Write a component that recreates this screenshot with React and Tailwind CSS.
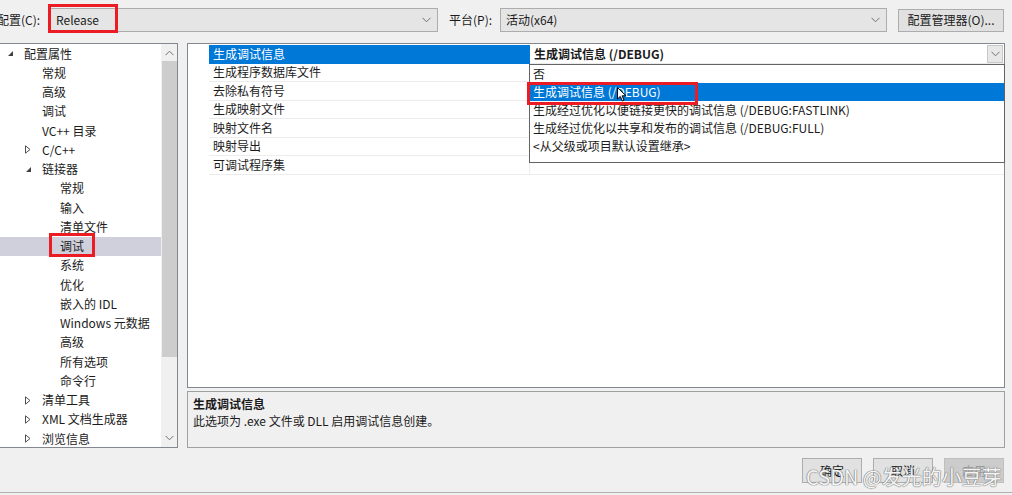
import React from 'react';

const FONT = '[font-family:"Noto_Sans_CJK_SC","Noto_Sans",sans-serif]';

const treeItems = [
  { label: '配置属性', level: 0, toggle: 'open' },
  { label: '常规', level: 1 },
  { label: '高级', level: 1 },
  { label: '调试', level: 1 },
  { label: 'VC++ 目录', level: 1 },
  { label: 'C/C++', level: 1, toggle: 'closed' },
  { label: '链接器', level: 1, toggle: 'open' },
  { label: '常规', level: 2 },
  { label: '输入', level: 2 },
  { label: '清单文件', level: 2 },
  { label: '调试', level: 2, selected: true },
  { label: '系统', level: 2 },
  { label: '优化', level: 2 },
  { label: '嵌入的 IDL', level: 2 },
  { label: 'Windows 元数据', level: 2 },
  { label: '高级', level: 2 },
  { label: '所有选项', level: 2 },
  { label: '命令行', level: 2 },
  { label: '清单工具', level: 1, toggle: 'closed' },
  { label: 'XML 文档生成器', level: 1, toggle: 'closed' },
  { label: '浏览信息', level: 1, toggle: 'closed' },
];

const props = [
  '生成调试信息',
  '生成程序数据库文件',
  '去除私有符号',
  '生成映射文件',
  '映射文件名',
  '映射导出',
  '可调试程序集',
];

const options = [
  '否',
  '生成调试信息 (/DEBUG)',
  '生成经过优化以便链接更快的调试信息 (/DEBUG:FASTLINK)',
  '生成经过优化以共享和发布的调试信息 (/DEBUG:FULL)',
  '<从父级或项目默认设置继承>',
];

const Chevron = ({ className = '' }) => (
  <svg width="9" height="6" viewBox="0 0 9 6" className={className}>
    <path d="M0.5 0.8 L4.5 4.8 L8.5 0.8" fill="none" stroke="#707070" strokeWidth="1" />
  </svg>
);

const Toggle = ({ state }) =>
  state === 'open' ? (
    <svg width="7" height="7" viewBox="0 0 7 7">
      <path d="M6 1 L6 6 L1 6 Z" fill="#404040" />
    </svg>
  ) : (
    <svg width="6" height="9" viewBox="0 0 6 9">
      <path d="M0.5 0.8 L5 4.5 L0.5 8.2 Z" fill="none" stroke="#505050" strokeWidth="1" />
    </svg>
  );

const Combo = ({ value, width }) => (
  <div className={`${width} h-[24px] border border-[#adadad] bg-[#e5e5e5] flex items-center pl-[5px] pr-[6px]`}>
    <span className="flex-1">{value}</span>
    <Chevron />
  </div>
);

const Button = ({ label, disabled }) => (
  <div
    className={`w-[60px] h-[25px] flex items-center justify-center border ${
      disabled ? 'border-[#bfbfbf] bg-[#cccccc] text-[#9a9a9a]' : 'border-[#adadad] bg-[#e1e1e1]'
    }`}
  >
    {label}
  </div>
);

export default function App() {
  return (
    <div className={`relative w-[1012px] h-[495px] overflow-hidden bg-[#f0f0f0] text-[12px] text-[#1b1b1b] ${FONT}`}>
      {/* top bar */}
      <div className="h-[43px] flex items-center pb-[3px]">
        <span className="ml-[-3px] w-[53px]">配置(C):</span>
        <Combo value="Release" width="w-[388px]" />
        <span className="ml-[11px] w-[51px]">平台(P):</span>
        <Combo value="活动(x64)" width="w-[387px]" />
        <div className="ml-[11px] w-[106px] h-[23px] border border-[#adadad] bg-[#e1e1e1] flex items-center justify-center">
          配置管理器(O)...
        </div>
      </div>

      <div className="flex h-[405px]">
        {/* tree */}
        <div className="w-[178px] h-[405px] bg-white border-t border-r border-b border-[#828790] flex">
          <div className="flex-1 flex flex-col">
            {treeItems.map((it, i) => (
              <div
                key={i}
                className={`h-[19.25px] flex items-center shrink-0 ${it.selected ? 'bg-[#cfd0dc]' : ''}`}
              >
                <div
                  className={`flex items-center ${
                    it.level === 0 ? 'pl-[7px]' : it.level === 1 ? 'pl-[25px]' : 'pl-[43px]'
                  }`}
                >
                  <span className="w-[17px] flex items-center">
                    {it.toggle ? <Toggle state={it.toggle} /> : null}
                  </span>
                  <span>{it.label}</span>
                </div>
              </div>
            ))}
          </div>
          <div className="w-[16px] bg-[#f0f0f0] flex flex-col items-center pt-[6px] pb-[6px]">
            <Chevron className="rotate-180" />
            <div className="mt-[5px] w-[15px] h-[296px] bg-[#cdcdcd]" />
            <div className="flex-1" />
            <Chevron />
          </div>
        </div>

        {/* right side */}
        <div className="ml-[9px] w-[818px] flex flex-col">
          <div className="relative h-[345px] bg-white border border-[#828790] pt-[1px]">
            {props.map((p, i) => (
              <div key={i} className="flex h-[18.5px]">
                <div className="w-[21px]" />
                <div
                  className={`w-[321px] flex items-center pl-[4px] border-b border-r ${
                    i === 0 ? 'bg-[#0078d7] text-white border-[#0078d7]' : 'border-[#ececec]'
                  }`}
                >
                  {p}
                </div>
                <div className="flex-1 flex items-center pl-[4px] border-b border-[#ececec]">
                  {i === 0 && (
                    <>
                      <span className="font-bold flex-1">生成调试信息 (/DEBUG)</span>
                      <div className="w-[16px] h-[18px] mr-[1px] border border-[#c8c8c8] bg-[#e8e8e8] flex items-center justify-center">
                        <Chevron />
                      </div>
                    </>
                  )}
                </div>
              </div>
            ))}

            {/* dropdown list */}
            <div className="absolute left-[341px] top-[20px] w-[476px] h-[99px] bg-white border border-[#646464] flex flex-col">
              {options.map((o, i) => (
                <div
                  key={i}
                  className={`h-[18px] flex items-center pl-[3px] ${i === 1 ? 'bg-[#0078d7] text-white' : ''}`}
                >
                  {o}
                </div>
              ))}
            </div>
          </div>

          <div className="mt-[3px] h-[57px] border border-[#a0a0a0] bg-[#f0f0f0] px-[5px] pt-[4px] flex flex-col">
            <span className="font-bold leading-[16px]">生成调试信息</span>
            <span className="leading-[18px]">此选项为 .exe 文件或 DLL 启用调试信息创建。</span>
          </div>
        </div>
      </div>

      {/* buttons */}
      <div className="flex justify-end gap-[11px] pr-[8px] pt-[10px]">
        <Button label="确定" />
        <Button label="取消" />
        <Button label="应用" disabled />
      </div>
      <div className="absolute left-0 right-0 bottom-[2px] h-px bg-[#b0b0b0]" />

      {/* annotations */}
      <div className="absolute left-[48px] top-[4px] w-[70px] h-[29px] border-[3px] border-[#ec1c24]" />
      <div className="absolute left-[49px] top-[233px] w-[46px] h-[24px] border-[3px] border-[#ec1c24]" />
      <div className="absolute left-[527px] top-[82px] w-[171px] h-[23px] border-[3px] border-[#ec1c24]" />

      {/* mouse cursor */}
      <svg className="absolute left-[617px] top-[87px]" width="10" height="15" viewBox="0 0 10 15">
        <path d="M0.5 0.5 L0.5 12 L3.3 9.4 L5.3 14 L7 13.2 L5.1 8.8 L9 8.8 Z" fill="white" stroke="black" strokeWidth="1" />
      </svg>

      {/* watermark */}
      <div className="absolute left-[806px] top-[464px] text-[20px] leading-[26px] text-[#f4f4f4] [text-shadow:0_0_1px_#7a7a7a,0_0_1px_#7a7a7a,0_0_1px_#7a7a7a]">
        CSDN @发光的小豆芽
      </div>
    </div>
  );
}
